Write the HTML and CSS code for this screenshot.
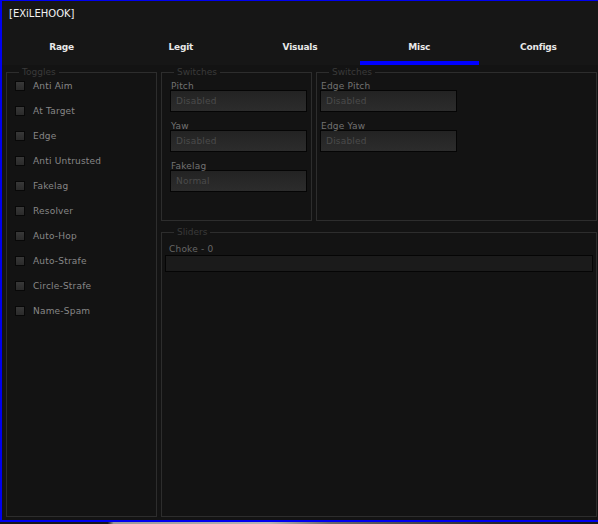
FILE: index.html
```html
<!DOCTYPE html>
<html>
<head>
<meta charset="utf-8">
<title>EXiLEHOOK</title>
<link rel="stylesheet" href="styles.css">
</head>
<body>
<div class="frame">
  <div class="header">
    <div class="title">[EXiLEHOOK]</div>
    <div class="tabs">
      <div class="tab"><span class="tab-label">Rage</span></div>
      <div class="tab"><span class="tab-label">Legit</span></div>
      <div class="tab"><span class="tab-label">Visuals</span></div>
      <div class="tab active"><span class="tab-label">Misc</span></div>
      <div class="tab"><span class="tab-label">Configs</span></div>
    </div>
  </div>
  <div class="content">
    <div class="group toggles">
      <span class="legend">Toggles</span>
      <div class="toggle"><span class="check"></span><span class="toggle-label">Anti Aim</span></div>
      <div class="toggle"><span class="check"></span><span class="toggle-label">At Target</span></div>
      <div class="toggle"><span class="check"></span><span class="toggle-label">Edge</span></div>
      <div class="toggle"><span class="check"></span><span class="toggle-label">Anti Untrusted</span></div>
      <div class="toggle"><span class="check"></span><span class="toggle-label">Fakelag</span></div>
      <div class="toggle"><span class="check"></span><span class="toggle-label">Resolver</span></div>
      <div class="toggle"><span class="check"></span><span class="toggle-label">Auto-Hop</span></div>
      <div class="toggle"><span class="check"></span><span class="toggle-label">Auto-Strafe</span></div>
      <div class="toggle"><span class="check"></span><span class="toggle-label">Circle-Strafe</span></div>
      <div class="toggle"><span class="check"></span><span class="toggle-label">Name-Spam</span></div>
    </div>
    <div class="group switches-a">
      <span class="legend">Switches</span>
      <div class="field"><div class="field-label">Pitch</div><div class="select">Disabled</div></div>
      <div class="field"><div class="field-label">Yaw</div><div class="select">Disabled</div></div>
      <div class="field"><div class="field-label">Fakelag</div><div class="select">Normal</div></div>
    </div>
    <div class="group switches-b">
      <span class="legend">Switches</span>
      <div class="field"><div class="field-label">Edge Pitch</div><div class="select">Disabled</div></div>
      <div class="field"><div class="field-label">Edge Yaw</div><div class="select">Disabled</div></div>
    </div>
    <div class="group sliders">
      <span class="legend">Sliders</span>
      <div class="slider-label">Choke - 0</div>
      <div class="slider-track"></div>
    </div>
  </div>
</div>
<div class="under"></div>
</body>
</html>
```
FILE: styles.css
```css
html, body {
  margin: 0;
  padding: 0;
  background: #1b1b1b;
  font-family: "DejaVu Sans", Verdana, sans-serif;
  font-size: 9px;
  overflow: hidden;
}

.frame {
  width: 600px;
  height: 522px;
  box-sizing: border-box;
  border-top: 1px solid #0000f0;
  border-left: 2px solid #0000f0;
  border-bottom: 2px solid #0000f0;
  border-right: 2px solid #333333;
  background: #131313;
  display: flex;
  flex-direction: column;
}

.header {
  background: #161616;
}

.title {
  height: 27px;
  box-sizing: border-box;
  padding: 7px 0 0 7px;
  line-height: 12px;
  font-size: 10px;
  color: #f2f2f2;
}

.tabs {
  display: flex;
  height: 37px;
}

.tab {
  width: 120px;
  box-sizing: border-box;
  padding-top: 13px;
  text-align: center;
  border-bottom: 4px solid transparent;
}

.tab.active {
  border-bottom-color: #0000ff;
}

.tab-label {
  display: inline-block;
  line-height: 12px;
  font-weight: bold;
  color: #e8e8e8;
  letter-spacing: -0.2px;
}

.content {
  flex: 1;
  display: grid;
  grid-template-columns: 151px 151px 281px;
  grid-template-rows: 149px 1fr;
  column-gap: 4px;
  row-gap: 11px;
  padding: 7px 0 3px 4px;
  min-height: 0;
}

.group {
  position: relative;
  border: 1px solid #2d2d2d;
  box-sizing: border-box;
}

.legend {
  position: absolute;
  top: -7px;
  left: 12px;
  padding: 0 3px;
  line-height: 12px;
  background: #131313;
  color: #3a3a3a;
}

.toggles {
  grid-column: 1;
  grid-row: 1 / 3;
  padding: 0 0 0 8px;
}

.toggle {
  height: 25px;
  display: flex;
  align-items: center;
  gap: 8px;
}

.check {
  width: 10px;
  height: 10px;
  box-sizing: border-box;
  border: 1px solid #080808;
  background: linear-gradient(#383838, #2b2b2b);
}

.toggle-label {
  color: #878787;
  line-height: 12px;
  letter-spacing: 0.2px;
}

.switches-a {
  grid-column: 2;
  grid-row: 1;
  padding: 6px 0 0 8px;
}

.switches-b {
  grid-column: 3;
  grid-row: 1;
  padding: 6px 0 0 3px;
}

.field {
  margin-bottom: 7px;
}

.field-label {
  height: 11px;
  line-height: 15px;
  padding-left: 1px;
  color: #727272;
  letter-spacing: 0.2px;
}

.select {
  width: 137px;
  height: 22px;
  box-sizing: border-box;
  border: 1px solid #050505;
  background: linear-gradient(#232323, #2c2c2c);
  color: #4b4b4b;
  line-height: 20px;
  padding-left: 5px;
  letter-spacing: 0.2px;
}

.sliders {
  grid-column: 2 / 4;
  grid-row: 2;
  padding: 9px 3px 0 3px;
}

.slider-label {
  height: 11px;
  line-height: 15px;
  padding-left: 4px;
  margin-bottom: 2px;
  color: #666666;
  letter-spacing: 0.2px;
}

.slider-track {
  height: 17px;
  box-sizing: border-box;
  border: 1px solid #050505;
  background: #1b1b1b;
}

.under {
  height: 2px;
  background: linear-gradient(90deg, #1a1a1a 0%, #1a1a1a 18%, #9a9a9a 19%, #b5b5b5 45%, #6a6a6a 55%, #2a2a2a 83%, #1a1a1a 100%);
}
```
